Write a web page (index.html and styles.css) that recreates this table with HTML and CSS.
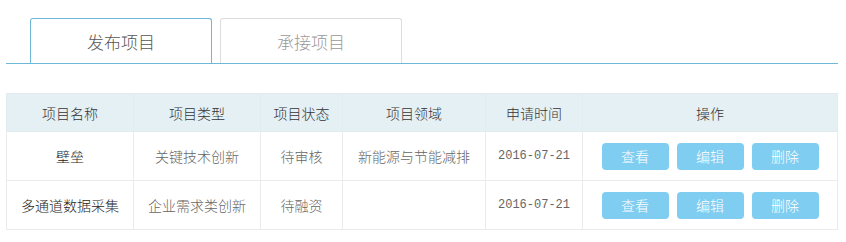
FILE: index.html
```html
<!DOCTYPE html>
<html>
<head>
<meta charset="utf-8">
<title>项目管理</title>
<link rel="stylesheet" href="styles.css">
</head>
<body>

<div class="tabs">
  <a class="tab active">发布项目</a>
  <a class="tab">承接项目</a>
</div>

<table class="project-table">
  <colgroup>
    <col class="c-name"><col class="c-type"><col class="c-state"><col class="c-field"><col class="c-date"><col class="c-ops">
  </colgroup>
  <thead>
    <tr><th>项目名称</th><th>项目类型</th><th>项目状态</th><th>项目领域</th><th>申请时间</th><th>操作</th></tr>
  </thead>
  <tbody>
    <tr>
      <td class="name">壁垒</td>
      <td>关键技术创新</td>
      <td>待审核</td>
      <td>新能源与节能减排</td>
      <td class="date">2016-07-21</td>
      <td class="ops"><button class="btn">查看</button><button class="btn">编辑</button><button class="btn">删除</button></td>
    </tr>
    <tr>
      <td class="name">多通道数据采集</td>
      <td>企业需求类创新</td>
      <td>待融资</td>
      <td></td>
      <td class="date">2016-07-21</td>
      <td class="ops"><button class="btn">查看</button><button class="btn">编辑</button><button class="btn">删除</button></td>
    </tr>
  </tbody>
</table>

</body>
</html>
```

FILE: styles.css
```css
body { margin: 0; background: #fff; color: #666; font-family: "Noto Sans CJK SC", "Microsoft YaHei", sans-serif; font-weight: 300; }

/* tab bar */
.tabs { display: flex; gap: 8px; margin: 18px 8px 0 6px; padding-left: 24px; border-bottom: 1px solid #6cb8d6; }
.tab { box-sizing: border-box; width: 182px; height: 45px; display: flex; align-items: center; justify-content: center; border: 1px solid #ddd; border-bottom: none; border-radius: 3px 3px 0 0; font-size: 17px; color: #999; cursor: pointer; }
.tab.active { border-color: #6cb8d6; color: #555; }

/* project list */
.project-table { width: 832px; margin: 29px 0 0 6px; border-collapse: collapse; font-size: 14px; text-align: center; }
.project-table th, .project-table td { border: 1px solid #ebebeb; padding: 0; }
.project-table th { height: 37px; background: #e5f0f5; color: #333; font-weight: 300; border-color: #e2ebef; }
.project-table td { height: 48px; }
.c-name { width: 127px; }
.c-type { width: 127px; }
.c-state { width: 82px; }
.c-field { width: 143px; }
.c-date { width: 97px; }
.project-table td.name { color: #222; }
.project-table td.date { font-family: "Liberation Mono", monospace; font-size: 12px; color: #666; }
.ops { font-size: 0; }
.btn { width: 67px; height: 27px; margin: 0 4px; border: none; border-radius: 4px; background: #7fcdf1; color: #fff; font-family: inherit; font-weight: 300; font-size: 14px; line-height: 27px; padding: 0; cursor: pointer; }
```
